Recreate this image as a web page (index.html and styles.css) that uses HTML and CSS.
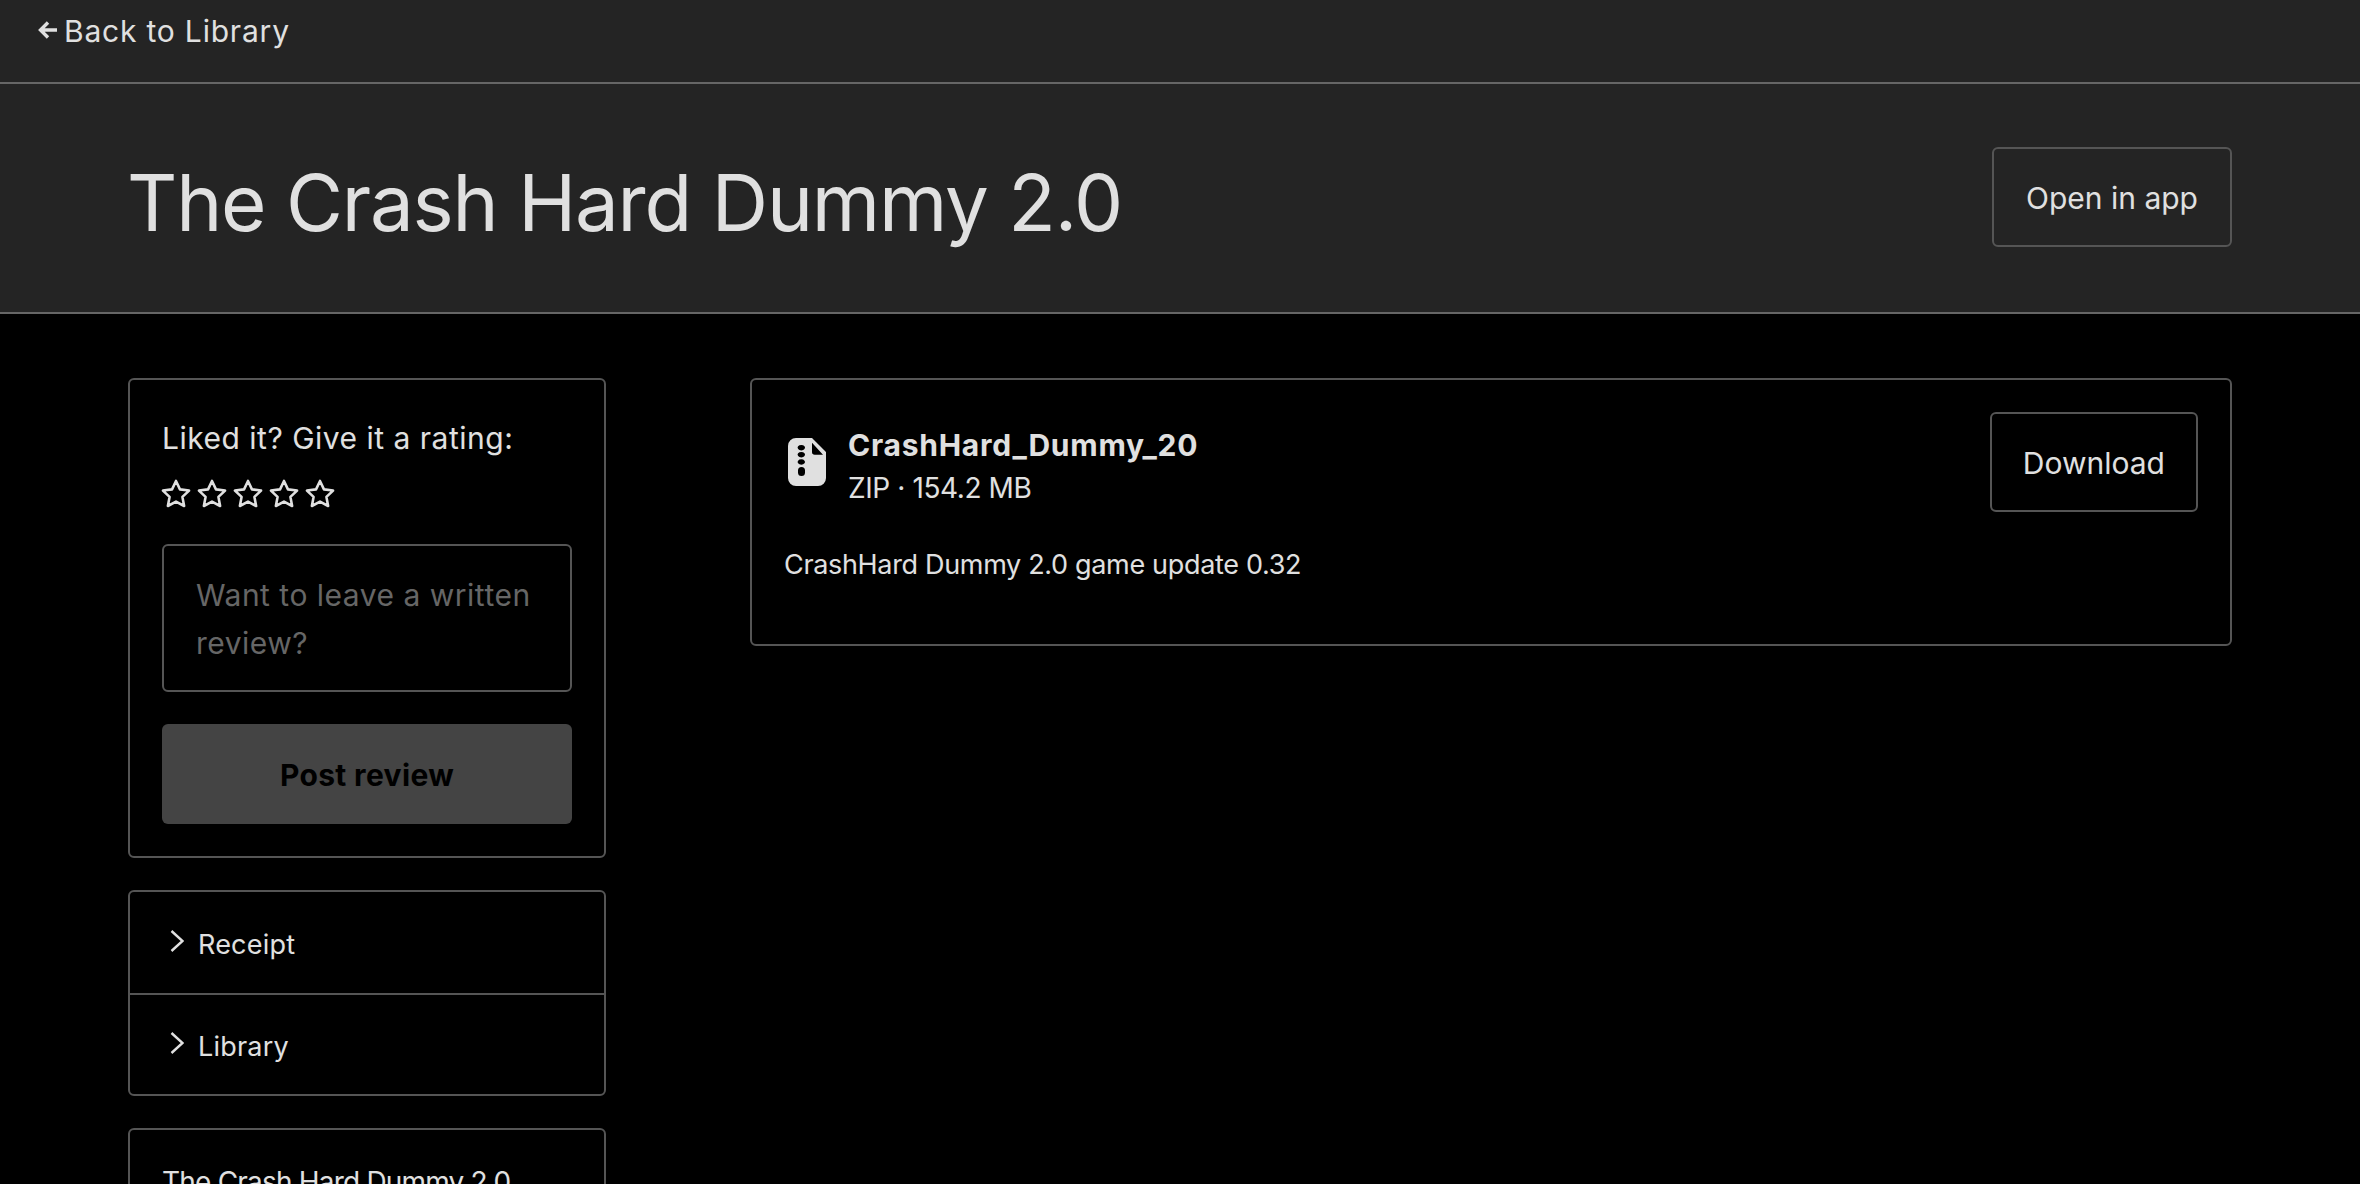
FILE: index.html
```html
<!DOCTYPE html>
<html>
<head>
<meta charset="utf-8">
<title>The Crash Hard Dummy 2.0</title>
<link rel="stylesheet" href="styles.css">
</head>
<body>
<div class="topbar">
	<a class="back-link" href="#">
		<svg class="back-arrow" viewBox="0 0 20 20"><path d="M19 10H3M10 2.500 2.500 10 10 17.500"/></svg>
		<span>Back to Library</span>
	</a>
</div>
<header class="header">
	<h1 class="title">The Crash Hard Dummy 2.0</h1>
	<a class="button open-app" href="#">Open in app</a>
</header>
<main class="content">
	<aside class="sidebar">
		<section class="card rating">
			<div class="rating-label">Liked it? Give it a rating:</div>
			<div class="stars">
				<svg class="star" viewBox="0 0 28 28"><path d="M14 1.800l3.700 7.900 8.500 1.100-6.200 5.900 1.600 8.500-7.600-4.100-7.600 4.100 1.600-8.500-6.200-5.900 8.500-1.100z"/></svg>
				<svg class="star" viewBox="0 0 28 28"><path d="M14 1.800l3.700 7.900 8.500 1.100-6.200 5.900 1.600 8.500-7.600-4.100-7.600 4.100 1.600-8.500-6.200-5.900 8.500-1.100z"/></svg>
				<svg class="star" viewBox="0 0 28 28"><path d="M14 1.800l3.700 7.900 8.500 1.100-6.200 5.900 1.600 8.500-7.600-4.100-7.600 4.100 1.600-8.500-6.200-5.900 8.500-1.100z"/></svg>
				<svg class="star" viewBox="0 0 28 28"><path d="M14 1.800l3.700 7.900 8.500 1.100-6.200 5.900 1.600 8.500-7.600-4.100-7.600 4.100 1.600-8.500-6.200-5.900 8.500-1.100z"/></svg>
				<svg class="star" viewBox="0 0 28 28"><path d="M14 1.800l3.700 7.900 8.500 1.100-6.200 5.900 1.600 8.500-7.600-4.100-7.600 4.100 1.600-8.500-6.200-5.900 8.500-1.100z"/></svg>
			</div>
			<textarea class="review-input" placeholder="Want to leave a written review?"></textarea>
			<button class="post-review">Post review</button>
		</section>
		<section class="card accordion">
			<div class="accordion-row">
				<svg class="chevron" viewBox="0 0 14 22"><path d="M1.500 1 12.500 11 1.500 21"/></svg>
				<span>Receipt</span>
			</div>
			<div class="accordion-row">
				<svg class="chevron" viewBox="0 0 14 22"><path d="M1.500 1 12.500 11 1.500 21"/></svg>
				<span>Library</span>
			</div>
		</section>
		<section class="card about">The Crash Hard Dummy 2.0</section>
	</aside>
	<section class="card file-card">
		<div class="file-row">
			<div class="file-info">
				<svg class="file-icon" viewBox="0 0 38 48"><path fill-rule="evenodd" d="M8 0H24L38 14V40a8 8 0 0 1-8 8H8a8 8 0 0 1-8-8V8a8 8 0 0 1 8-8ZM24 4.700V14a2.700 2.700 0 0 0 2.700 2.700H35ZM13.300 7a3.700 2.700 0 1 0 .01 0ZM13.300 14a3.700 2.700 0 1 0 .01 0ZM13.300 21.300a3.700 2.700 0 1 0 .01 0ZM13.500 29a3.500 3.500 0 0 0-3.500 3.500v2a3.500 3.500 0 0 0 7 0v-2a3.500 3.500 0 0 0-3.500-3.500Z"/></svg>
				<div class="file-text">
					<div class="file-name">CrashHard_Dummy_20</div>
					<div class="file-meta">ZIP · 154.2 MB</div>
				</div>
			</div>
			<a class="button download" href="#">Download</a>
		</div>
		<p class="file-desc">CrashHard Dummy 2.0 game update 0.32</p>
	</section>
</main>
</body>
</html>
```
FILE: styles.css
```css
html, body {
	margin: 0;
	height: 1184px;
	overflow: hidden;
}
body {
	background: #000;
	color: #e0e0e0;
	font-family: Inter, "Liberation Sans", sans-serif;
	font-size: 28px;
	line-height: 48px;
}
.topbar {
	background: #242424;
	border-bottom: 2px solid #666;
	height: 82px;
	padding-left: 38px;
}
.back-link {
	display: flex;
	align-items: center;
	gap: 6px;
	color: #e0e0e0;
	text-decoration: none;
	font-size: 30px;
	height: 62px;
	letter-spacing: 0.8px;
}
.back-arrow {
	width: 20px;
	height: 20px;
	margin-top: -2px;
	fill: none;
	stroke: #e0e0e0;
	stroke-width: 3.4;
}
.header {
	background: #242424;
	border-bottom: 2px solid #666;
	height: 228px;
	padding: 0 128px;
	display: flex;
	align-items: center;
	justify-content: space-between;
}
.title {
	margin: 0;
	padding-top: 10px;
	font-size: 78px;
	font-weight: 400;
	line-height: 100px;
	letter-spacing: -1.2px;
	text-indent: -1px;
}
.button {
	display: block;
	border: 2px solid #555;
	border-radius: 6px;
	padding: 25px 32px 23px;
	color: #e0e0e0;
	text-decoration: none;
	font-size: 30px;
}
.open-app {
	margin-bottom: 2px;
}
.content {
	display: grid;
	grid-template-columns: 478px 1fr;
	gap: 144px;
	padding: 64px 128px 0;
	align-items: start;
}
.sidebar {
	display: flex;
	flex-direction: column;
	gap: 32px;
}
.card {
	border: 2px solid #555;
	border-radius: 6px;
	padding: 32px;
}
.rating {
	display: flex;
	flex-direction: column;
}
.rating-label {
	font-size: 30px;
	line-height: 52px;
	letter-spacing: 0.5px;
}
.stars {
	display: flex;
	gap: 6px;
	margin: 10px 0 30px -1px;
	height: 40px;
	align-items: center;
}
.star {
	width: 30px;
	height: 30px;
	fill: none;
	stroke: #e0e0e0;
	stroke-width: 2.4;
	stroke-linejoin: round;
}
.review-input {
	display: block;
	box-sizing: border-box;
	width: 100%;
	height: 148px;
	background: #000;
	border: 2px solid #555;
	border-radius: 6px;
	padding: 25px 32px 19px;
	color: #e0e0e0;
	font: inherit;
	font-size: 30px;
	letter-spacing: 0.5px;
	resize: none;
}
.review-input::placeholder {
	color: #666;
}
.post-review {
	margin-top: 32px;
	height: 100px;
	padding-top: 3px;
	background: #444;
	border: 0;
	border-radius: 6px;
	color: #000;
	font: inherit;
	font-size: 30px;
	font-weight: 700;
	letter-spacing: 0.35px;
}
.accordion {
	padding: 0;
}
.accordion-row {
	display: flex;
	align-items: center;
	gap: 14px;
	box-sizing: border-box;
	height: 101px;
	padding: 5px 0 0 40px;
	font-size: 27px;
	letter-spacing: 0.2px;
}
.accordion-row + .accordion-row {
	border-top: 2px solid #555;
}
.chevron {
	width: 14px;
	height: 22px;
	margin-top: -8px;
	fill: none;
	stroke: #e0e0e0;
	stroke-width: 2.4;
}
.about {
	padding-top: 28px;
	font-size: 28px;
	letter-spacing: -0.8px;
}
.file-row {
	display: flex;
	justify-content: space-between;
	align-items: flex-start;
}
.file-info {
	display: flex;
	align-items: center;
	gap: 22px;
	height: 100px;
	padding-left: 4px;
}
.file-icon {
	width: 38px;
	height: 48px;
	fill: #e0e0e0;
}
.file-text {
	padding-top: 8px;
}
.file-name {
	font-size: 30px;
	font-weight: 700;
	line-height: 42px;
	letter-spacing: 0.75px;
}
.file-meta {
	padding-top: 1px;
	font-size: 28px;
	line-height: 42px;
	letter-spacing: -0.4px;
}
.download {
	padding-left: 31px;
	padding-right: 31px;
}
.file-desc {
	margin: 29px 0 23px;
	font-size: 27px;
	letter-spacing: -0.33px;
}
```
